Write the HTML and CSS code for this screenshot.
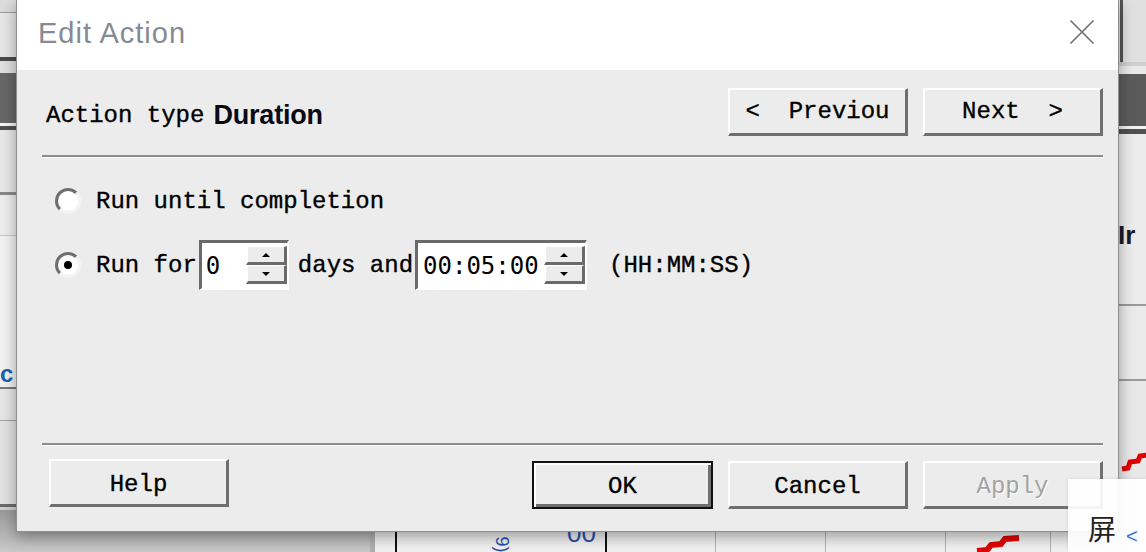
FILE: index.html
```html
<!DOCTYPE html>
<html>
<head>
<meta charset="utf-8">
<link rel="stylesheet" href="styles.css">
</head>
<body>
<div class="desktop">
  <div class="app-left"><span class="left-c">c</span></div>
  <div class="app-right"><span class="edge-line"></span><span class="right-ir">Ir</span>
    <svg class="squiggle-r" width="30" height="20" viewBox="0 0 30 20"><polyline points="2,17 8,16 10,10 18,9 20,4 28,3" fill="none" stroke="#e00000" stroke-width="5"/></svg>
  </div>
  <div class="under-shadow"></div>
  <div class="chart">
    <span class="chart-rot">9)</span>
    <span class="chart-00">00</span>
    <svg class="squiggle-c" width="50" height="20" viewBox="0 0 50 20"><polyline points="2,17 12,16 16,11 26,10 30,5 44,4" fill="none" stroke="#e00000" stroke-width="6"/></svg>
  </div>

  <div class="dialog">
    <div class="titlebar">
      <span class="title">Edit Action</span>
      <svg class="close" width="26" height="26" viewBox="0 0 26 26"><path d="M1.5 1.5 L24.5 24.5 M24.5 1.5 L1.5 24.5" stroke="#6e6e6e" stroke-width="1.6" fill="none"/></svg>
    </div>
    <div class="body">
      <div class="header">
        <div class="action-type"><span class="mono">Action type</span><span class="dur">Duration</span></div>
        <div class="nav">
          <div class="btn">&lt;  Previou</div>
          <div class="btn">Next  &gt;</div>
        </div>
      </div>
      <div class="sep"></div>
      <div class="options">
        <div class="opt opt1"><span class="radio"></span><span class="lbl">Run until completion</span></div>
        <div class="opt opt2"><span class="radio checked"></span><span class="lbl">Run for</span>
          <div class="spin spin1"><span class="spin-text">0</span><div class="spin-btns"><span class="sb"><i class="up"></i></span><span class="sb"><i class="down"></i></span></div></div>
          <span class="lbl days">days and</span>
          <div class="spin spin2"><span class="spin-text">00:05:00</span><div class="spin-btns"><span class="sb"><i class="up"></i></span><span class="sb"><i class="down"></i></span></div></div>
          <span class="lbl fmt">(HH:MM:SS)</span>
        </div>
      </div>
      <div class="sep sep2"></div>
      <div class="footer">
        <div class="btn help">Help</div>
        <div class="right-btns">
          <div class="btn ok">OK</div>
          <div class="btn">Cancel</div>
          <div class="btn disabled">Apply</div>
        </div>
      </div>
    </div>
  </div>

  <div class="toast"><span class="toast-ch">屏</span><span class="toast-arrow">&lt;</span></div>
</div>
</body>
</html>
```

FILE: styles.css
```css
* { box-sizing: border-box; }
html, body { margin: 0; padding: 0; }
body {
  width: 1146px;
  height: 552px;
  overflow: hidden;
  background: #e4e4e4;
  font-family: "Liberation Mono", monospace;
}
.desktop {
  position: relative;
  width: 1146px;
  height: 552px;
  overflow: hidden;
}

/* background application pieces */
.app-left {
  position: absolute;
  left: 0; top: 0;
  width: 30px; height: 552px;
  background: linear-gradient(to bottom,
    #dcdcdc 0 12px, #9c9c9c 12px 13px, #e6e6e6 13px 57px,
    #4a4a4a 57px 61px, #e0e0e0 61px 73px, #686868 73px 123px,
    #f4f4f4 123px 126px, #505050 126px 130px, #e8e8e8 130px 192px,
    #8a8a8a 192px 195px, #eeeeee 195px 235px, #c8c8c8 235px 236px,
    #f2f2f2 236px 387px, #7a7a7a 387px 389px, #e6e6e6 389px 420px,
    #a0a0a0 420px 421px, #e2e2e2 421px 504px, #6a6a6a 504px 507px,
    #cfcfcf 507px 552px);
}
.left-c {
  position: absolute;
  left: 0; top: 360px;
  font-family: "Liberation Sans", sans-serif;
  font-weight: bold;
  font-size: 24px;
  color: #1d5fb0;
}
.app-right {
  position: absolute;
  left: 1110px; top: 0;
  width: 36px; height: 552px;
  background: linear-gradient(to bottom,
    #e0e0e0 0 62px, #cfcfcf 62px 66px, #e9e9e9 66px 74px,
    #5b5b5b 74px 126px, #f2f2f2 126px 129px, #505050 129px 134px,
    #ececec 134px 304px, #9a9a9a 304px 306px, #ebebeb 306px 379px,
    #9a9a9a 379px 381px, #e8e8e8 381px 552px);
}
.edge-line {
  position: absolute;
  left: 10px; top: 0;
  width: 3px; height: 62px;
  background: #555;
}
.right-ir {
  position: absolute;
  left: 8px; top: 220px;
  font-family: "Liberation Sans", sans-serif;
  font-weight: bold;
  font-size: 26px;
  color: #1a1a2a;
}
.squiggle-r { position: absolute; left: 10px; top: 452px; }
.under-shadow {
  position: absolute;
  left: 0; top: 510px;
  width: 372px; height: 42px;
  background: linear-gradient(to bottom, #9a9a9a, #c9c9c9);
}
.chart {
  position: absolute;
  left: 370px; top: 500px;
  width: 700px; height: 52px;
  border-left: 5px solid #b0b0b0;
  background:
    linear-gradient(to right,
      transparent 0 20px, #111 20px 22px, transparent 22px 230px,
      #111 230px 232px, transparent 232px 340px, #b4b4b4 340px 341px,
      transparent 341px 450px, #b4b4b4 450px 451px, transparent 451px 570px,
      #b4b4b4 570px 571px, transparent 571px 675px, #b4b4b4 675px 676px,
      transparent 676px),
    #f1f1f1;
}
.chart-00 {
  position: absolute;
  left: 192px; top: 18px;
  font-family: "Liberation Sans", sans-serif;
  font-size: 26px;
  color: #2a4fb0;
}
.chart-rot {
  position: absolute;
  left: 118px; top: 34px;
  font-family: "Liberation Sans", sans-serif;
  font-size: 18px;
  color: #2a4fb0;
  transform: rotate(90deg);
}
.squiggle-c { position: absolute; left: 600px; top: 34px; }

/* dialog */
.dialog {
  position: absolute;
  left: 16px; top: 0;
  width: 1103px; height: 532px;
  display: flex;
  flex-direction: column;
  background: #ececec;
  border: 1px solid #8f8f8f;
  border-top: none;
  box-shadow: 0 5px 14px rgba(0, 0, 0, 0.35);
}
.titlebar {
  height: 70px;
  flex: none;
  background: #fff;
  display: flex;
  align-items: center;
  justify-content: space-between;
  padding: 0 23px 4px 21px;
}
.title {
  font-family: "Liberation Sans", sans-serif;
  font-size: 29px;
  letter-spacing: 1px;
  color: #858a93;
}
.close { margin-bottom: 2px; }

.body {
  flex: 1;
  display: flex;
  flex-direction: column;
  padding: 18px 15px 22px 25px;
}
.header {
  height: 48px;
  display: flex;
  align-items: center;
  justify-content: space-between;
}
.action-type {
  display: flex;
  align-items: center;
  gap: 9px;
  margin-left: 4px;
  margin-top: 6px;
}
.mono, .lbl, .btn, .spin-text {
  -webkit-text-stroke: 0.35px currentColor;
}
.mono { font-size: 24px; color: #000; }
.dur {
  font-family: "Liberation Sans", sans-serif;
  font-weight: bold;
  font-size: 27px;
  color: #0a0a14;
  letter-spacing: -0.2px;
}
.nav { display: flex; gap: 15px; }

.btn {
  width: 180px;
  height: 48px;
  display: flex;
  align-items: center;
  justify-content: center;
  background: #ececec;
  border-style: solid;
  border-width: 2px 3px 3px 2px;
  border-color: #fff #6f6f6f #6f6f6f #fff;
  font-family: "Liberation Mono", monospace;
  font-size: 24px;
  color: #000;
  white-space: pre;
}

.sep {
  flex: none;
  margin-top: 19px;
  height: 3px;
  border-top: 2px solid #8c8c8c;
  border-bottom: 1px solid #fff;
}
.sep2 { margin-top: auto; }

.options {
  margin-top: 23px;
  display: flex;
  flex-direction: column;
  gap: 19px;
}
.opt {
  display: flex;
  align-items: center;
  padding-left: 13px;
}
.opt1 { height: 40px; }
.opt2 { height: 50px; }
.lbl { font-size: 24px; color: #000; white-space: pre; }
.radio {
  position: relative;
  width: 26px;
  height: 26px;
  flex: none;
  margin-right: 15px;
  border-radius: 50%;
  background: #fff;
  border: 3px solid;
  border-color: #6e6e6e #f4f4f4 #f4f4f4 #6e6e6e;
}
.radio.checked::after {
  content: "";
  position: absolute;
  left: 6px; top: 6px;
  width: 8px; height: 8px;
  border-radius: 50%;
  background: #000;
}

.spin {
  display: flex;
  height: 50px;
  background: #fff;
  border-style: solid;
  border-width: 3px 2px 2px 3px;
  border-color: #6a6a6a #fff #fff #6a6a6a;
}
.spin1 { width: 90px; margin: 0 9px 0 2px; }
.spin2 { width: 172px; margin: 0 22px 0 2px; }
.spin-text {
  flex: 1;
  display: flex;
  align-items: center;
  padding-left: 5px;
  font-family: "DejaVu Sans Mono", monospace;
  font-size: 24px;
  color: #000;
  -webkit-text-stroke: 0;
}
.spin1 .spin-text { padding-left: 4px; }
.spin-btns {
  width: 41px;
  display: flex;
  flex-direction: column;
  padding: 3px 0 4px 0;
}
.sb {
  flex: 1;
  display: flex;
  align-items: center;
  justify-content: center;
  background: #ececec;
  border-style: solid;
  border-width: 1px 3px 3px 2px;
  border-color: #fff #6a6a6a #6a6a6a #fff;
}
.sb i {
  width: 0; height: 0;
  border-left: 4px solid transparent;
  border-right: 4px solid transparent;
}
.sb i.up { border-bottom: 4px solid #000; }
.sb i.down { border-top: 4px solid #000; }

.footer {
  margin-top: 15px;
  height: 48px;
  display: flex;
  align-items: flex-start;
}
.footer .btn { padding-top: 3px; }
.help { margin-left: 7px; margin-top: -2px; }
.right-btns {
  margin-left: auto;
  display: flex;
  gap: 15px;
}
.ok {
  border: 2px solid #111;
  box-shadow: inset 2px 2px 0 #fff, inset -3px -3px 0 #6f6f6f;
  width: 181px;
}
.btn.disabled {
  color: #a3a3a3;
  text-shadow: 1px 1px 0 #fff;
  -webkit-text-stroke: 0;
}

/* notification overlay */
.toast {
  position: absolute;
  left: 1068px; top: 479px;
  width: 78px; height: 73px;
  background: rgba(255, 255, 255, 0.92);
  box-shadow: 0 0 3px rgba(0, 0, 0, 0.12);
}
.toast-ch {
  position: absolute;
  left: 20px; top: 33px;
  font-family: "Noto Sans CJK SC", sans-serif;
  font-size: 28px;
  line-height: 32px;
  color: #222;
}
.toast-arrow {
  position: absolute;
  left: 58px; top: 46px;
  font-family: "Liberation Sans", sans-serif;
  font-size: 20px;
  color: #2d7be0;
}
```
